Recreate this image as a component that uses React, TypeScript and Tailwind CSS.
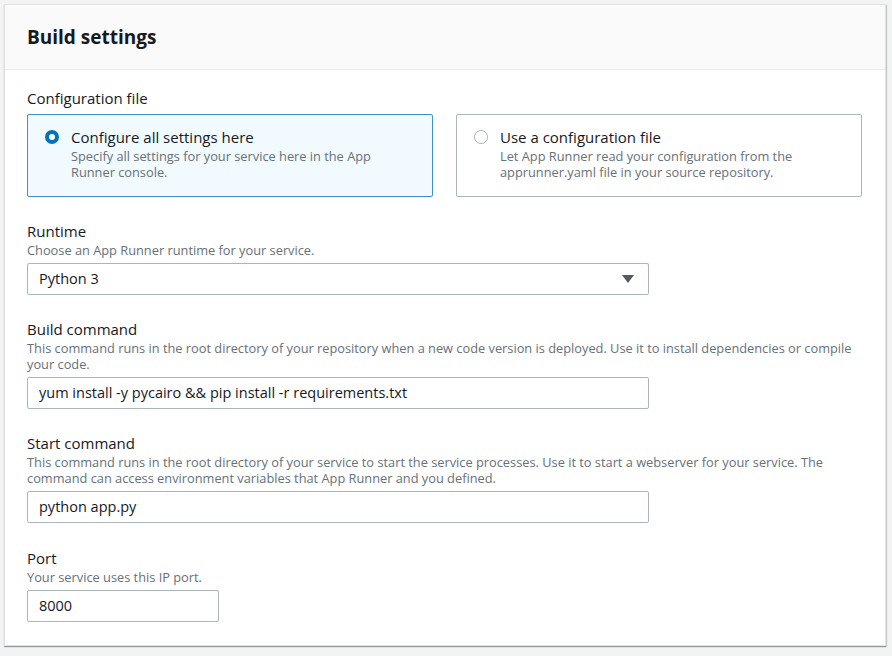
const font = { fontFamily: '"Open Sans", "Noto Sans", sans-serif' };

function Field({ label, desc, children }: { label: string; desc: string; children: React.ReactNode }) {
  return (
    <div>
      <div className="text-[15px] leading-[20px] text-[#16191f]">{label}</div>
      <div className="mt-[1px] text-[12.8px] leading-[16px] text-[#687078]">{desc}</div>
      <div className="mt-[5px]">{children}</div>
    </div>
  );
}

function RadioTile({ checked, title, desc }: { checked: boolean; title: string; desc: string }) {
  return (
    <div
      className={
        checked
          ? 'flex gap-[12px] rounded-[2px] border border-[#3d93c4] bg-[#f1faff] pl-[17px] pr-[16px] pt-[12px] pb-[16px]'
          : 'flex gap-[12px] rounded-[2px] border border-[#aab7b8] bg-white pl-[17px] pr-[16px] pt-[12px] pb-[16px]'
      }
    >
      <div className="shrink-0 pt-[3px]">
        {checked ? (
          <div className="h-[14px] w-[14px] rounded-full border-[4px] border-[#0073bb] bg-white" />
        ) : (
          <div className="h-[14px] w-[14px] rounded-full border border-[#aab7b8] bg-white" />
        )}
      </div>
      <div>
        <div className="text-[15px] leading-[20px] text-[#16191f]">{title}</div>
        <div className="mt-[1px] text-[12.8px] leading-[16px] text-[#687078]">{desc}</div>
      </div>
    </div>
  );
}

export default function App() {
  return (
    <div className="min-h-screen bg-[#f2f3f3] pt-[4px] pl-[4px] pr-[6px]" style={font}>
      <div className="border border-[#dfe3e3] bg-white shadow-[0_1px_1px_rgba(0,28,36,0.3),1px_1px_1px_rgba(0,28,36,0.15)]">
        {/* Header */}
        <div className="border-b border-[#eaeded] bg-[#fafafa] px-[22px] pt-[18px] pb-[18px]">
          <h2 className="text-[19px] font-bold leading-[28px] text-[#16191f]">Build settings</h2>
        </div>

        <div className="pl-[22px] pr-[23px] pt-[18px] pb-[23px]">
          <div className="text-[15px] leading-[20px] text-[#16191f]">Configuration file</div>
          <div className="mt-[6px] grid grid-cols-2 gap-[23px]">
            <RadioTile
              checked
              title="Configure all settings here"
              desc="Specify all settings for your service here in the App Runner console."
            />
            <RadioTile
              checked={false}
              title="Use a configuration file"
              desc="Let App Runner read your configuration from the apprunner.yaml file in your source repository."
            />
          </div>

          <div className="mt-[24px] flex flex-col gap-[24px]">
            <Field label="Runtime" desc="Choose an App Runner runtime for your service.">
              <div className="flex h-[32px] w-[622px] items-center justify-between rounded-[2px] border border-[#aab7b8] pl-[11px] pr-[14px] text-[14.5px] text-[#16191f]">
                <span>Python 3</span>
                <svg width="12" height="10" viewBox="0 0 12 10">
                  <path d="M0 1h12L6 9z" fill="#545b64" />
                </svg>
              </div>
            </Field>

            <Field
              label="Build command"
              desc="This command runs in the root directory of your repository when a new code version is deployed. Use it to install dependencies or compile your code."
            >
              <div className="flex h-[32px] w-[622px] items-center rounded-[2px] border border-[#aab7b8] px-[11px] text-[14.5px] text-[#16191f]">
                yum install -y pycairo &amp;&amp; pip install -r requirements.txt
              </div>
            </Field>

            <Field
              label="Start command"
              desc="This command runs in the root directory of your service to start the service processes. Use it to start a webserver for your service. The command can access environment variables that App Runner and you defined."
            >
              <div className="flex h-[32px] w-[622px] items-center rounded-[2px] border border-[#aab7b8] px-[11px] text-[14.5px] text-[#16191f]">
                python app.py
              </div>
            </Field>

            <div className="mt-[1px]">
              <Field label="Port" desc="Your service uses this IP port.">
                <div className="mt-[2px] flex h-[32px] w-[192px] items-center rounded-[2px] border border-[#aab7b8] px-[11px] text-[14.5px] text-[#16191f]">
                  8000
                </div>
              </Field>
            </div>
          </div>
        </div>
      </div>
    </div>
  );
}
